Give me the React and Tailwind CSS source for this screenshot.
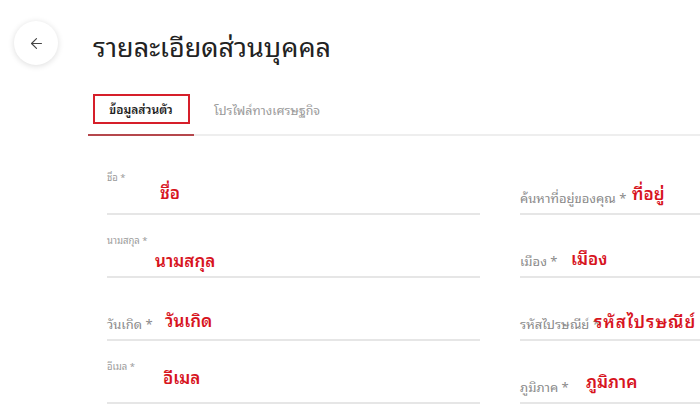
import { ArrowLeft } from 'lucide-react'

const FONT = { fontFamily: '"Noto Sans Thai Looped", "Noto Sans Thai", "Noto Sans", "Liberation Sans", sans-serif' }

const LEFT = [
  { label: 'ชื่อ *', small: true, note: 'ชื่อ', nx: 53, ny: 29 },
  { label: 'นามสกุล *', small: true, note: 'นามสกุล', nx: 48, ny: 34 },
  { label: 'วันเกิด *', small: false, note: 'วันเกิด', nx: 58, ny: 31 },
  { label: 'อีเมล *', small: true, note: 'อีเมล', nx: 56, ny: 25 },
]

const RIGHT = [
  { label: 'ค้นหาที่อยู่ของคุณ *', note: 'ที่อยู่', nx: 112, ny: 30 },
  { label: 'เมือง *', note: 'เมือง', nx: 51, ny: 32 },
  { label: 'รหัสไปรษณีย์ *', note: 'รหัสไปรษณีย์', nx: 74, ny: 32, wide: true },
  { label: 'ภูมิภาค *', note: 'ภูมิภาค', nx: 66, ny: 29 },
]

function Field({ f }) {
  return (
    <div className="relative h-[63px] border-b-2 border-[#e6e6e6]">
      {f.small ? (
        <div className="pt-[19px] text-[9.5px] leading-[12px] text-[#9a9a9a]">{f.label}</div>
      ) : (
        <div className="pt-[37px] text-[13px] leading-[18px] text-[#8a8a8a]">{f.label}</div>
      )}
      <span
        className={`absolute whitespace-nowrap text-[17px] leading-[22px] font-semibold text-[#d7141e] ${f.wide ? 'tracking-[1px]' : ''}`}
        style={{ left: f.nx, top: f.ny }}
      >
        {f.note}
      </span>
    </div>
  )
}

export default function App() {
  return (
    <div className="w-[700px] h-[409px] overflow-hidden bg-white" style={FONT}>
      <div className="flex items-center pt-[21px] pl-[14px]">
        <button className="w-[44px] h-[44px] rounded-full bg-white shadow-[0_1px_6px_rgba(0,0,0,0.14)] flex items-center justify-center text-[#444]">
          <ArrowLeft size={17} strokeWidth={1.6} />
        </button>
        <h1 className="ml-[35px] mt-[3px] text-[27px] leading-[34px] text-[#222] font-normal">รายละเอียดส่วนบุคคล</h1>
      </div>

      <div className="pl-[88px] mt-[28px]">
        <div className="flex border-b-2 border-[#eeeeee] h-[43px]">
          <div className="relative w-[106px] -mb-[2px] border-b-2 border-[#b5474c] flex justify-center">
            <div className="mt-[1px] h-[30px] w-[97px] border-2 border-[#d61f2a] flex items-center justify-center text-[12px] font-semibold text-[#222]">
              ข้อมูลส่วนตัว
            </div>
          </div>
          <div className="pl-[20px] pt-[7px] text-[12.5px] text-[#9a9a9a]">โปรไฟล์ทางเศรษฐกิจ</div>
        </div>

        <div className="grid grid-cols-[373px_200px] gap-x-[40px] pl-[19px] pt-[16px]">
          <div>
            {LEFT.map((f) => (
              <Field key={f.label} f={f} />
            ))}
          </div>
          <div>
            {RIGHT.map((f) => (
              <Field key={f.label} f={f} />
            ))}
          </div>
        </div>
      </div>
    </div>
  )
}
